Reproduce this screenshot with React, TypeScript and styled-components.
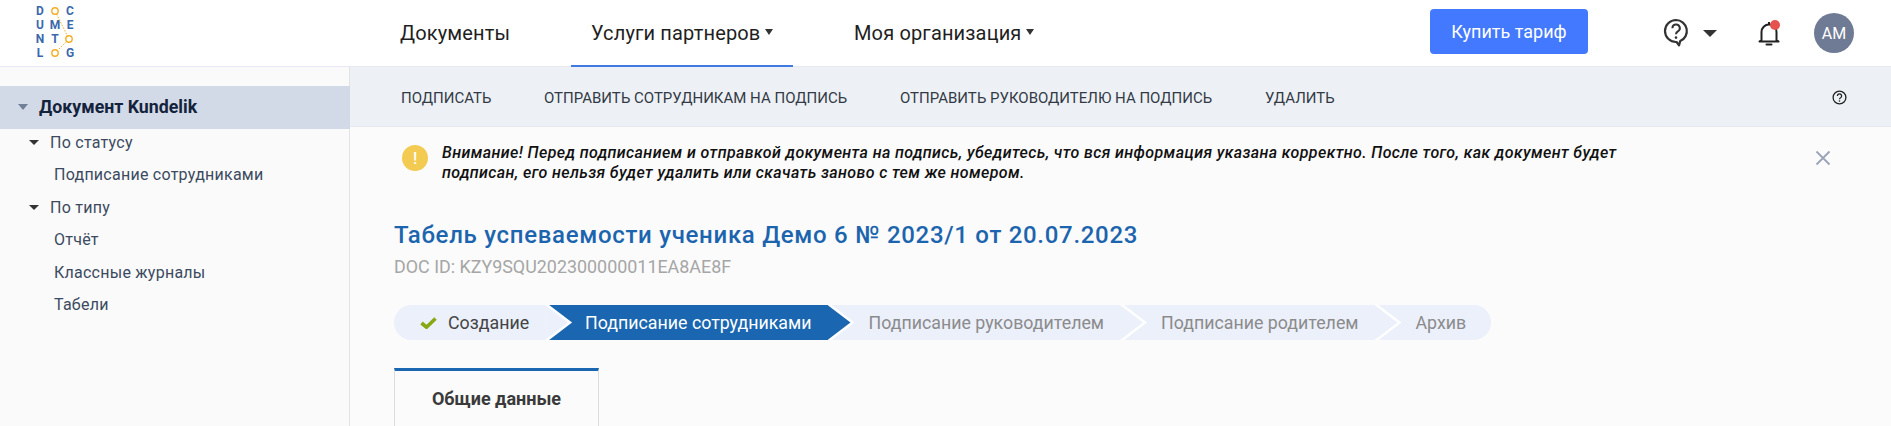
import styled, { createGlobalStyle } from "styled-components";

const GlobalStyle = createGlobalStyle`
  html, body {
    margin: 0;
    padding: 0;
    height: 100%;
    overflow: hidden;
    background: #fbfbfb;
    font-family: Roboto, "Liberation Sans", sans-serif;
  }
  * { box-sizing: border-box; }
`;

const Page = styled.div`
  width: 1891px;
  height: 426px;
  display: flex;
  flex-direction: column;
  overflow: hidden;
`;

/* header */
const Header = styled.header`
  height: 67px;
  flex: none;
  display: flex;
  align-items: stretch;
  background: #fff;
  border-bottom: 1px solid #e7e8f1;
`;

const LogoBox = styled.div`
  width: 380px;
  flex: none;
  padding: 4px 0 0 34px;
`;

const Nav = styled.nav`
  display: flex;
  width: 1050px;
  flex: none;
`;

const NavItem = styled.div<{ $active?: boolean; $w: number; $pl: number }>`
  width: ${(p) => p.$w}px;
  padding-left: ${(p) => p.$pl}px;
  display: flex;
  align-items: center;
  gap: 5px;
  font-size: 20px;
  letter-spacing: 0.15px;
  color: #1f1f1f;
  margin-bottom: -1px;
  border-bottom: 2px solid ${(p) => (p.$active ? "#3f7ae0" : "transparent")};
`;

const SmallCaret = styled.span`
  width: 0;
  height: 0;
  border-left: 4px solid transparent;
  border-right: 4px solid transparent;
  border-top: 6px solid #333;
  margin-top: -2px;
`;

const BuyButton = styled.button`
  width: 158px;
  height: 45px;
  margin-top: 9px;
  flex: none;
  border: 0;
  border-radius: 4px;
  background: #4379ff;
  color: #fff;
  font-family: inherit;
  font-size: 18px;
`;

const HeaderIcons = styled.div`
  display: flex;
  align-items: center;
  padding-left: 75px;
`;

const HelpCaret = styled.span`
  width: 0;
  height: 0;
  margin-left: 14px;
  border-left: 7px solid transparent;
  border-right: 7px solid transparent;
  border-top: 7px solid #333;
`;

const Bell = styled.span`
  position: relative;
  display: flex;
  margin-left: 41px;
`;

const BellDot = styled.span`
  position: absolute;
  top: 1px;
  right: 0;
  width: 10px;
  height: 10px;
  border-radius: 50%;
  background: #e5534f;
`;

const Avatar = styled.div`
  width: 40px;
  height: 40px;
  margin-left: 34px;
  border-radius: 50%;
  background: #6f7a94;
  color: #fff;
  font-size: 16px;
  display: flex;
  align-items: center;
  justify-content: center;
`;

/* body */
const Body = styled.div`
  flex: 1;
  display: flex;
  min-height: 0;
`;

const Sidebar = styled.aside`
  width: 350px;
  flex: none;
  padding-top: 19px;
  background: #fafafa;
  border-right: 1px solid #e3e3e3;
`;

const RootRow = styled.div`
  height: 43px;
  display: flex;
  align-items: center;
  padding: 0 0 2px 18px;
  gap: 11px;
  background: #d3dae7;
  color: #14233c;
  font-size: 17.75px;
  font-weight: 700;
  margin-right: -1px;
  margin-bottom: -3px;
`;

const RootCaret = styled.span`
  width: 0;
  height: 0;
  border-left: 5px solid transparent;
  border-right: 5px solid transparent;
  border-top: 6px solid #717f98;
`;

const GroupRow = styled.div`
  height: 32.5px;
  display: flex;
  align-items: center;
  padding-left: 29px;
  gap: 11px;
  font-size: 16px;
  letter-spacing: 0.25px;
  color: #3b4a5f;
`;

const GroupCaret = styled.span`
  width: 0;
  height: 0;
  border-left: 5px solid transparent;
  border-right: 5px solid transparent;
  border-top: 5px solid #333;
`;

const LeafRow = styled.div`
  height: 32.5px;
  display: flex;
  align-items: center;
  padding-left: 54px;
  font-size: 16px;
  letter-spacing: 0.25px;
  color: #3b4a5f;
`;

const Main = styled.main`
  flex: 1;
  min-width: 0;
  background: #fbfbfb;
`;

const Toolbar = styled.div`
  height: 60px;
  display: flex;
  align-items: center;
  padding: 2px 0 0 51px;
  background: #edf1f5;
  border-bottom: 1px solid #e7e9ee;
`;

const ToolLink = styled.span<{ $w: number }>`
  width: ${(p) => p.$w}px;
  flex: none;
  font-size: 15px;
  color: #333a45;
  text-transform: uppercase;
`;

const ToolHelp = styled.span`
  margin-left: auto;
  margin-right: 44px;
  display: flex;
`;

const Alert = styled.div`
  display: flex;
  align-items: flex-start;
  padding: 16px 0 0 52px;
  height: 70px;
`;

const AlertIcon = styled.div`
  width: 26px;
  height: 26px;
  flex: none;
  margin-top: 2px;
  border-radius: 50%;
  background: #f4cb52;
  color: #fff;
  font-size: 16px;
  font-weight: 500;
  display: flex;
  align-items: center;
  justify-content: center;
`;

const AlertText = styled.div`
  width: 1190px;
  margin-left: 14px;
  font-size: 16px;
  font-style: italic;
  font-weight: 500;
  line-height: 20px;
  letter-spacing: 0.39px;
  color: #111;
`;

const AlertClose = styled.span`
  display: flex;
  margin: 7px 0 0 183px;
`;

const Content = styled.div`
  padding: 23px 0 0 44px;
`;

const Title = styled.h1`
  margin: 0;
  font-size: 24px;
  line-height: 30px;
  font-weight: 500;
  letter-spacing: 0.7px;
  color: #1c65ae;
`;

const DocId = styled.div`
  margin-top: 7px;
  font-size: 17.9px;
  line-height: 20px;
  color: #a6a6a6;
`;

const Steps = styled.div`
  margin-top: 28px;
  display: flex;
  height: 35px;
`;

const Step = styled.div<{ $active?: boolean; $z: number; $first?: boolean; $last?: boolean; $pl: number; $pr: number }>`
  position: relative;
  z-index: ${(p) => p.$z};
  display: flex;
  align-items: center;
  gap: 11px;
  padding: 0 ${(p) => p.$pr}px 0 ${(p) => p.$pl}px;
  font-size: 17.8px;
  white-space: nowrap;
  background: ${(p) => (p.$active ? "#1a66b0" : "#ebf0fb")};
  color: ${(p) => (p.$active ? "#fff" : p.$first ? "#444" : "#8b8b8b")};
  border-radius: ${(p) => (p.$first ? "18px 0 0 18px" : p.$last ? "0 18px 18px 0" : "0")};

  ${(p) =>
    !p.$last &&
    `
    &::before, &::after {
      content: "";
      position: absolute;
      top: 0;
      height: 35px;
    }
    &::before {
      left: calc(100% - 1px);
      width: 27px;
      background: #fff;
      clip-path: polygon(0 0, 4px 0, 100% 50%, 4px 100%, 0 100%);
    }
    &::after {
      left: calc(100% - 1px);
      width: 23px;
      background: ${p.$active ? "#1a66b0" : "#ebf0fb"};
      clip-path: polygon(0 0, 100% 50%, 0 100%);
    }
  `}
`;

const Tab = styled.div`
  margin-top: 28px;
  width: 205px;
  height: 60px;
  padding-top: 17px;
  text-align: center;
  background: #fbfbfb;
  border: 1px solid #dcdcdc;
  border-top: 3px solid #1a66b0;
  font-size: 18px;
  font-weight: 700;
  color: #3a3a3a;
`;

const LogoLetter = styled.text`
  font-family: Roboto, sans-serif;
  font-size: 12px;
  font-weight: 700;
  fill: #3b68ad;
  text-anchor: middle;
`;

const Logo = () => {
  const rows = [
    ["D", "", "C"],
    ["U", "M", "E"],
    ["N", "T", ""],
    ["L", "", "G"],
  ];
  return (
    <svg width="48" height="56" viewBox="0 0 48 56">
      {rows.map((row, r) =>
        row.map((ch, c) =>
          ch ? (
            <LogoLetter key={`${r}${c}`} x={6 + c * 15} y={11 + r * 14}>
              {ch}
            </LogoLetter>
          ) : null
        )
      )}
      <g fill="none" stroke="#f5ae27">
        <circle cx="21" cy="7" r="3.2" strokeWidth="1.4" />
        <circle cx="35" cy="35" r="3.2" strokeWidth="1.4" />
        <circle cx="21" cy="49" r="3.2" strokeWidth="1.4" />
        <path d="M22.5 10l11 22M32.5 37.5L23.5 46.5" strokeWidth="1" strokeDasharray="1.6 1.4" />
      </g>
    </svg>
  );
};

const HelpBubble = () => (
  <svg width="26" height="30" viewBox="0 0 26 30" fill="none">
    <path
      d="M13 2a11 11 0 1 0 0 22h.6l2.4 3.4 1.2-4.3A11 11 0 0 0 13 2z"
      stroke="#333"
      strokeWidth="2.2"
      strokeLinejoin="round"
    />
    <path d="M9.4 10.2a3.7 3.7 0 1 1 5.5 3.2c-1.2.7-1.9 1.4-1.9 2.8" stroke="#333" strokeWidth="2" />
    <circle cx="13" cy="19.6" r="1.3" fill="#333" />
  </svg>
);

const BellIcon = () => (
  <svg width="22" height="28" viewBox="0 0 22 28" fill="none">
    <path
      d="M3.5 21V13a7.5 7.5 0 0 1 15 0v8l2 1.6H1.5z"
      stroke="#222"
      strokeWidth="2"
      strokeLinejoin="round"
    />
    <path d="M8.5 25.5h5" stroke="#222" strokeWidth="2" strokeLinecap="round" />
    <path d="M11 3v2.5" stroke="#222" strokeWidth="2" />
  </svg>
);

const SmallHelp = () => (
  <svg width="15" height="15" viewBox="0 0 15 15" fill="none">
    <circle cx="7.5" cy="7.5" r="6.4" stroke="#222" strokeWidth="1.3" />
    <path d="M5.4 5.9a2.1 2.1 0 1 1 3.2 1.8c-.7.4-1.1.8-1.1 1.6" stroke="#222" strokeWidth="1.3" />
    <circle cx="7.5" cy="11" r=".8" fill="#222" />
  </svg>
);

const CloseIcon = () => (
  <svg width="16" height="16" viewBox="0 0 16 16">
    <path d="M1.5 1.5l13 13M14.5 1.5l-13 13" stroke="#9aa3b8" strokeWidth="1.8" />
  </svg>
);

const CheckIcon = () => (
  <svg width="17" height="12" viewBox="0 0 17 12">
    <path d="M1.5 6l5 4.2L15.5 1.5" fill="none" stroke="#86a812" strokeWidth="3.6" />
  </svg>
);

export default function App() {
  return (
    <Page>
      <GlobalStyle />
      <Header>
        <LogoBox>
          <Logo />
        </LogoBox>
        <Nav>
          <NavItem $w={191} $pl={20}>Документы</NavItem>
          <NavItem $active $w={222} $pl={20}>
            Услуги партнеров <SmallCaret />
          </NavItem>
          <NavItem $w={400} $pl={61}>
            Моя организация <SmallCaret />
          </NavItem>
        </Nav>
        <BuyButton>Купить тариф</BuyButton>
        <HeaderIcons>
          <HelpBubble />
          <HelpCaret />
          <Bell>
            <BellIcon />
            <BellDot />
          </Bell>
          <Avatar>АМ</Avatar>
        </HeaderIcons>
      </Header>
      <Body>
        <Sidebar>
          <RootRow>
            <RootCaret />
            Документ Kundelik
          </RootRow>
          <GroupRow>
            <GroupCaret />
            По статусу
          </GroupRow>
          <LeafRow>Подписание сотрудниками</LeafRow>
          <GroupRow>
            <GroupCaret />
            По типу
          </GroupRow>
          <LeafRow>Отчёт</LeafRow>
          <LeafRow>Классные журналы</LeafRow>
          <LeafRow>Табели</LeafRow>
        </Sidebar>
        <Main>
          <Toolbar>
            <ToolLink $w={143}>Подписать</ToolLink>
            <ToolLink $w={356}>Отправить сотрудникам на подпись</ToolLink>
            <ToolLink $w={365}>Отправить руководителю на подпись</ToolLink>
            <ToolLink $w={80}>Удалить</ToolLink>
            <ToolHelp>
              <SmallHelp />
            </ToolHelp>
          </Toolbar>
          <Alert>
            <AlertIcon>!</AlertIcon>
            <AlertText>
              Внимание! Перед подписанием и отправкой документа на подпись, убедитесь, что вся информация указана
              корректно. После того, как документ будет подписан, его нельзя будет удалить или скачать заново с тем же
              номером.
            </AlertText>
            <AlertClose>
              <CloseIcon />
            </AlertClose>
          </Alert>
          <Content>
            <Title>Табель успеваемости ученика Демо 6 № 2023/1 от 20.07.2023</Title>
            <DocId>DOC ID: KZY9SQU202300000011EA8AE8F</DocId>
            <Steps>
              <Step $first $z={5} $pl={26} $pr={17}>
                <CheckIcon />
                Создание
              </Step>
              <Step $active $z={4} $pl={39} $pr={17}>
                Подписание сотрудниками
              </Step>
              <Step $z={3} $pl={40} $pr={17}>
                Подписание руководителем
              </Step>
              <Step $z={2} $pl={40} $pr={17}>
                Подписание родителем
              </Step>
              <Step $last $z={1} $pl={40} $pr={25}>
                Архив
              </Step>
            </Steps>
            <Tab>Общие данные</Tab>
          </Content>
        </Main>
      </Body>
    </Page>
  );
}
